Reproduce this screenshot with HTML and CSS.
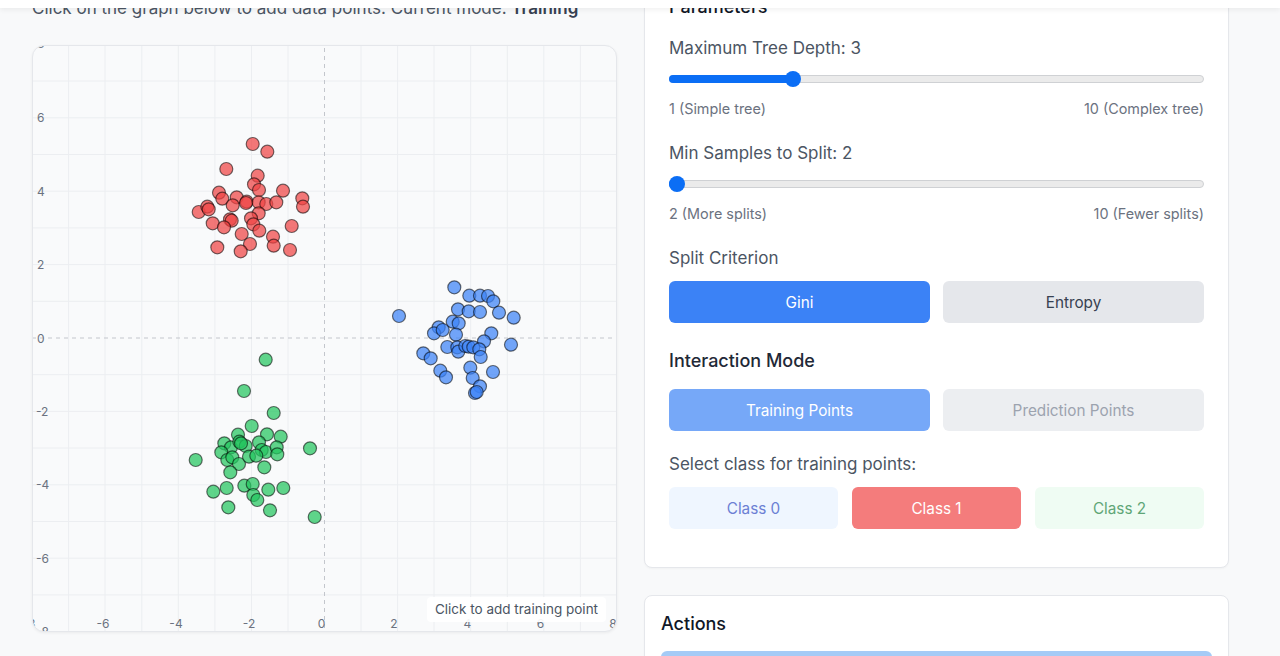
FILE: index.html
```html
<!DOCTYPE html>
<html lang="en">
<head>
<meta charset="utf-8">
<title>Decision Tree Playground</title>
<link rel="stylesheet" href="styles.css">
</head>
<body>
<div class="topbar"></div>
<main class="page">
  <section class="left">
    <p class="subtitle">Click on the graph below to add data points. Current mode: <b>Training</b></p>
    <div class="plot">
      <svg width="583" height="585" viewBox="33 46 583 585" xmlns="http://www.w3.org/2000/svg">
        <g class="grid">
          <line x1="68.6" y1="0" x2="68.6" y2="700"/><line x1="105" y1="0" x2="105" y2="700"/>
          <line x1="141.8" y1="0" x2="141.8" y2="700"/><line x1="178.3" y1="0" x2="178.3" y2="700"/>
          <line x1="214.9" y1="0" x2="214.9" y2="700"/><line x1="251.5" y1="0" x2="251.5" y2="700"/>
          <line x1="288" y1="0" x2="288" y2="700"/><line x1="361" y1="0" x2="361" y2="700"/>
          <line x1="397.6" y1="0" x2="397.6" y2="700"/><line x1="434" y1="0" x2="434" y2="700"/>
          <line x1="470.7" y1="0" x2="470.7" y2="700"/><line x1="507.3" y1="0" x2="507.3" y2="700"/>
          <line x1="543.8" y1="0" x2="543.8" y2="700"/><line x1="580.4" y1="0" x2="580.4" y2="700"/>
          <line x1="0" y1="81" x2="700" y2="81"/><line x1="0" y1="117.8" x2="700" y2="117.8"/>
          <line x1="0" y1="154.5" x2="700" y2="154.5"/><line x1="0" y1="191.2" x2="700" y2="191.2"/>
          <line x1="0" y1="227.9" x2="700" y2="227.9"/><line x1="0" y1="264.6" x2="700" y2="264.6"/>
          <line x1="0" y1="301.3" x2="700" y2="301.3"/><line x1="0" y1="374.7" x2="700" y2="374.7"/>
          <line x1="0" y1="411.4" x2="700" y2="411.4"/><line x1="0" y1="448" x2="700" y2="448"/>
          <line x1="0" y1="484.8" x2="700" y2="484.8"/><line x1="0" y1="521.5" x2="700" y2="521.5"/>
          <line x1="0" y1="558.2" x2="700" y2="558.2"/><line x1="0" y1="594.9" x2="700" y2="594.9"/>
        </g>
        <g class="axis">
          <line x1="324.5" y1="0" x2="324.5" y2="700"/>
          <line x1="0" y1="338" x2="700" y2="338"/>
        </g>
        <g class="ticks">
          <text x="37" y="48.4">8</text><text x="37" y="122.3">6</text><text x="37" y="195.7">4</text>
          <text x="37" y="269.1">2</text><text x="37" y="342.5">0</text><text x="36" y="415.9">-2</text>
          <text x="36" y="489.3">-4</text><text x="36" y="562.7">-6</text><text x="36" y="636.1">-8</text>
        </g>
        <g class="ticks xt">
          <text x="29" y="627.5">-8</text><text x="103" y="627.5">-6</text><text x="176" y="627.5">-4</text>
          <text x="249" y="627.5">-2</text><text x="321.5" y="627.5">0</text><text x="394" y="627.5">2</text>
          <text x="467.5" y="627.5">4</text><text x="540.5" y="627.5">6</text><text x="613" y="627.5">8</text>
        </g>
        <g class="pt red">
          <circle cx="252.7" cy="144" r="6.5"/><circle cx="267.3" cy="151.7" r="6.5"/><circle cx="226.3" cy="169" r="6.5"/>
          <circle cx="257.7" cy="175.7" r="6.5"/><circle cx="254" cy="184.3" r="6.5"/><circle cx="259" cy="190" r="6.5"/>
          <circle cx="283" cy="190.7" r="6.5"/><circle cx="219" cy="192.7" r="6.5"/><circle cx="222.3" cy="198.7" r="6.5"/>
          <circle cx="236.7" cy="197.3" r="6.5"/><circle cx="246.7" cy="201.7" r="6.5"/><circle cx="246" cy="203" r="6.5"/>
          <circle cx="258.7" cy="202.3" r="6.5"/><circle cx="266.3" cy="204" r="6.5"/><circle cx="276.3" cy="202.3" r="6.5"/>
          <circle cx="302.3" cy="198.3" r="6.5"/><circle cx="303" cy="206.7" r="6.5"/><circle cx="198.7" cy="212" r="6.5"/>
          <circle cx="207.3" cy="206.7" r="6.5"/><circle cx="208.7" cy="209.3" r="6.5"/><circle cx="232.7" cy="205.3" r="6.5"/>
          <circle cx="258.7" cy="213.3" r="6.5"/><circle cx="251" cy="218.3" r="6.5"/><circle cx="230" cy="219.3" r="6.5"/>
          <circle cx="231.7" cy="220.7" r="6.5"/><circle cx="212.7" cy="223.3" r="6.5"/><circle cx="224" cy="227.3" r="6.5"/>
          <circle cx="253.3" cy="224.3" r="6.5"/><circle cx="259.3" cy="230.7" r="6.5"/><circle cx="291.7" cy="226" r="6.5"/>
          <circle cx="241.7" cy="234" r="6.5"/><circle cx="250" cy="244" r="6.5"/><circle cx="273" cy="236.7" r="6.5"/>
          <circle cx="273.7" cy="245.7" r="6.5"/><circle cx="217.3" cy="247.3" r="6.5"/><circle cx="240.7" cy="251.3" r="6.5"/>
          <circle cx="290" cy="250" r="6.5"/>
        </g>
        <g class="pt blue">
          <circle cx="454.3" cy="287.3" r="6.5"/><circle cx="469.3" cy="295.7" r="6.5"/><circle cx="480" cy="295.7" r="6.5"/>
          <circle cx="488" cy="296" r="6.5"/><circle cx="493.3" cy="301.3" r="6.5"/><circle cx="399" cy="316" r="6.5"/>
          <circle cx="458" cy="309.3" r="6.5"/><circle cx="468.7" cy="311.3" r="6.5"/><circle cx="480" cy="312" r="6.5"/>
          <circle cx="499" cy="312.7" r="6.5"/><circle cx="513.7" cy="317.7" r="6.5"/><circle cx="452.7" cy="321.7" r="6.5"/>
          <circle cx="458.7" cy="323.3" r="6.5"/><circle cx="438.7" cy="327.3" r="6.5"/><circle cx="434" cy="333.3" r="6.5"/>
          <circle cx="442.7" cy="330" r="6.5"/><circle cx="456" cy="334.7" r="6.5"/><circle cx="491.3" cy="333.3" r="6.5"/>
          <circle cx="484" cy="341.3" r="6.5"/><circle cx="511" cy="344.7" r="6.5"/><circle cx="447.3" cy="347" r="6.5"/>
          <circle cx="457.3" cy="347.3" r="6.5"/><circle cx="458.3" cy="351.7" r="6.5"/><circle cx="465.3" cy="346" r="6.5"/>
          <circle cx="468.7" cy="346.7" r="6.5"/><circle cx="473.3" cy="347.3" r="6.5"/><circle cx="479.3" cy="349.3" r="6.5"/>
          <circle cx="480.7" cy="357" r="6.5"/><circle cx="423.3" cy="353.3" r="6.5"/><circle cx="430.7" cy="358.3" r="6.5"/>
          <circle cx="440.3" cy="370.7" r="6.5"/><circle cx="446" cy="377.3" r="6.5"/><circle cx="470.3" cy="367.7" r="6.5"/>
          <circle cx="493" cy="372" r="6.5"/><circle cx="472.7" cy="378" r="6.5"/><circle cx="480" cy="386.3" r="6.5"/>
          <circle cx="475" cy="393" r="6.5"/><circle cx="476.7" cy="392" r="6.5"/>
        </g>
        <g class="pt green">
          <circle cx="265.7" cy="359.7" r="6.5"/><circle cx="244" cy="391" r="6.5"/><circle cx="273.7" cy="413" r="6.5"/>
          <circle cx="251.7" cy="426" r="6.5"/><circle cx="238" cy="434.7" r="6.5"/><circle cx="267" cy="434.3" r="6.5"/>
          <circle cx="280.7" cy="436.7" r="6.5"/><circle cx="224.3" cy="443.3" r="6.5"/><circle cx="231" cy="447.3" r="6.5"/>
          <circle cx="239.3" cy="441.7" r="6.5"/><circle cx="245.7" cy="446" r="6.5"/><circle cx="259" cy="442.3" r="6.5"/>
          <circle cx="261.7" cy="450" r="6.5"/><circle cx="266" cy="452" r="6.5"/><circle cx="276.7" cy="447.3" r="6.5"/>
          <circle cx="277.3" cy="454.3" r="6.5"/><circle cx="221.3" cy="452.3" r="6.5"/><circle cx="227.3" cy="460" r="6.5"/>
          <circle cx="232.3" cy="457.3" r="6.5"/><circle cx="239" cy="464" r="6.5"/><circle cx="249" cy="456.7" r="6.5"/>
          <circle cx="256.3" cy="455.7" r="6.5"/><circle cx="310" cy="448.3" r="6.5"/><circle cx="195.7" cy="460" r="6.5"/>
          <circle cx="264.3" cy="467.3" r="6.5"/><circle cx="230.3" cy="472.3" r="6.5"/><circle cx="213.3" cy="491.7" r="6.5"/>
          <circle cx="226.7" cy="488" r="6.5"/><circle cx="244.3" cy="485.7" r="6.5"/><circle cx="252.7" cy="484" r="6.5"/>
          <circle cx="253.3" cy="495" r="6.5"/><circle cx="257.3" cy="500" r="6.5"/><circle cx="268.3" cy="489.7" r="6.5"/>
          <circle cx="283.3" cy="488" r="6.5"/><circle cx="228.3" cy="507.3" r="6.5"/><circle cx="270" cy="510.3" r="6.5"/>
          <circle cx="314.7" cy="517" r="6.5"/><circle cx="241" cy="443.3" r="6.5"/>
        </g>
      </svg>
      <div class="hint">Click to add training point</div>
    </div>
  </section>

  <aside class="right">
    <div class="card params">
      <h2 class="card-title">Parameters</h2>

      <div class="field">
        <div class="field-label">Maximum Tree Depth: 3</div>
        <div class="slider">
          <div class="slider-fill" style="width:124px"></div>
          <div class="slider-thumb" style="left:116px"></div>
        </div>
        <div class="range-labels"><span>1 (Simple tree)</span><span>10 (Complex tree)</span></div>
      </div>

      <div class="field">
        <div class="field-label">Min Samples to Split: 2</div>
        <div class="slider">
          <div class="slider-fill" style="width:9px"></div>
          <div class="slider-thumb" style="left:0px"></div>
        </div>
        <div class="range-labels"><span>2 (More splits)</span><span>10 (Fewer splits)</span></div>
      </div>

      <div class="field-label">Split Criterion</div>
      <div class="btn-row two">
        <button class="btn btn-primary">Gini</button>
        <button class="btn btn-gray">Entropy</button>
      </div>

      <h3 class="section-title">Interaction Mode</h3>
      <div class="btn-row two tight">
        <button class="btn btn-soft-primary">Training Points</button>
        <button class="btn btn-soft-gray">Prediction Points</button>
      </div>

      <div class="field-label select-label">Select class for training points:</div>
      <div class="btn-row three">
        <button class="btn cls0">Class 0</button>
        <button class="btn cls1">Class 1</button>
        <button class="btn cls2">Class 2</button>
      </div>
    </div>

    <div class="card actions">
      <h2 class="card-title">Actions</h2>
      <button class="btn btn-train">Train Decision Tree</button>
    </div>
  </aside>
</main>
</body>
</html>
```

FILE: styles.css
```css
* { box-sizing: border-box; margin: 0; padding: 0; }

html, body { height: 100%; }

body {
  background: #f8f9fa;
  font-family: Inter, "Liberation Sans", sans-serif;
  color: #374151;
  overflow: hidden;
}

.topbar {
  position: fixed;
  top: 0;
  left: 0;
  right: 0;
  height: 8px;
  background: #ffffff;
  box-shadow: 0 2px 5px rgba(0, 0, 0, 0.06);
  z-index: 10;
}

.page {
  display: grid;
  grid-template-columns: 585px 585px;
  column-gap: 27px;
  padding-left: 32px;
  margin-top: -32px;
  align-items: start;
}

/* Left column */
.left { padding-top: 28px; }

.subtitle {
  font-size: 17px;
  line-height: 24px;
  color: #4b5563;
  margin-bottom: 25px;
  white-space: nowrap;
}
.subtitle b { font-weight: 600; color: #374151; }

.plot {
  position: relative;
  width: 585px;
  height: 587px;
  border: 1px solid #e5e7eb;
  border-radius: 12px;
  background: #f9fafb;
  overflow: hidden;
  box-shadow: 0 1px 3px rgba(0, 0, 0, 0.06);
}
.plot svg { display: block; }

.grid line { stroke: #eceef1; stroke-width: 1; }
.axis line { stroke: #c3c6cc; stroke-width: 1; stroke-dasharray: 4 4; }

.ticks text {
  font-family: Inter, "Liberation Sans", sans-serif;
  font-size: 12px;
  fill: #6b7280;
}
.xt text { text-anchor: middle; }

.pt circle { stroke: rgba(0, 0, 0, 0.55); stroke-width: 1.2; }
.red circle { fill: rgba(239, 68, 68, 0.72); }
.blue circle { fill: rgba(59, 130, 246, 0.72); }
.green circle { fill: rgba(34, 197, 94, 0.72); }

.hint {
  position: absolute;
  left: 394px;
  top: 551px;
  width: 179px;
  height: 25px;
  background: rgba(255, 255, 255, 0.92);
  border-radius: 4px;
  font-size: 13.5px;
  line-height: 25px;
  color: #4b5563;
  text-align: center;
}

/* Right column */
.right {
  display: flex;
  flex-direction: column;
  gap: 27px;
}

.card {
  background: #ffffff;
  border: 1px solid #e5e7eb;
  border-radius: 8px;
  box-shadow: 0 1px 2px rgba(0, 0, 0, 0.03);
}

.params { padding: 24px 24px 38px; }

.card-title {
  font-size: 18px;
  line-height: 28px;
  font-weight: 500;
  color: #111827;
}
.params .card-title { margin-bottom: 15px; }

.field { margin-bottom: 22px; }

.field-label {
  font-size: 17px;
  line-height: 24px;
  color: #4b5563;
}

.slider {
  position: relative;
  height: 8px;
  margin-top: 15px;
  border: 1px solid #cfd1d4;
  border-radius: 4px;
  background: #ebebeb;
}
.slider-fill {
  position: absolute;
  left: -1px;
  top: -1px;
  bottom: -1px;
  background: #0b6ef5;
  border-radius: 4px;
}
.slider-thumb {
  position: absolute;
  top: -5px;
  width: 16px;
  height: 16px;
  margin-left: -1px;
  border-radius: 50%;
  background: #0b6ef5;
}

.range-labels {
  display: flex;
  justify-content: space-between;
  margin-top: 16px;
  font-size: 14.4px;
  line-height: 20px;
  color: #6b7280;
}

.btn-row {
  display: grid;
  margin-top: 11px;
}
.btn-row.two { grid-template-columns: 1fr 1fr; column-gap: 13px; }
.btn-row.three { grid-template-columns: 1fr 1fr 1fr; column-gap: 14px; }
.btn-row.tight { margin-top: 14px; }

.btn {
  height: 42px;
  border: none;
  border-radius: 6px;
  font-family: Inter, "Liberation Sans", sans-serif;
  font-size: 15.3px;
}
.btn-primary { background: #3b82f6; color: #ffffff; }
.btn-gray { background: #e5e7eb; color: #374151; }
.btn-soft-primary { background: #76a8f8; color: #ffffff; }
.btn-soft-gray { background: #eceef1; color: #9ca3af; }

.cls0 { background: #eff6ff; color: #6b80d4; }
.cls1 { background: #f47c7c; color: #ffffff; }
.cls2 { background: #effcf3; color: #5fa677; }

.section-title {
  margin-top: 24px;
  font-size: 18px;
  line-height: 28px;
  font-weight: 500;
  color: #1f2937;
}

.select-label { margin-top: 21px; }

.actions { padding: 16px 16px 16px; }
.actions .card-title { line-height: 24px; }

.btn-train {
  width: 100%;
  margin-top: 15px;
  background: #a5cbf6;
  color: #ffffff;
  height: 44px;
}
```
